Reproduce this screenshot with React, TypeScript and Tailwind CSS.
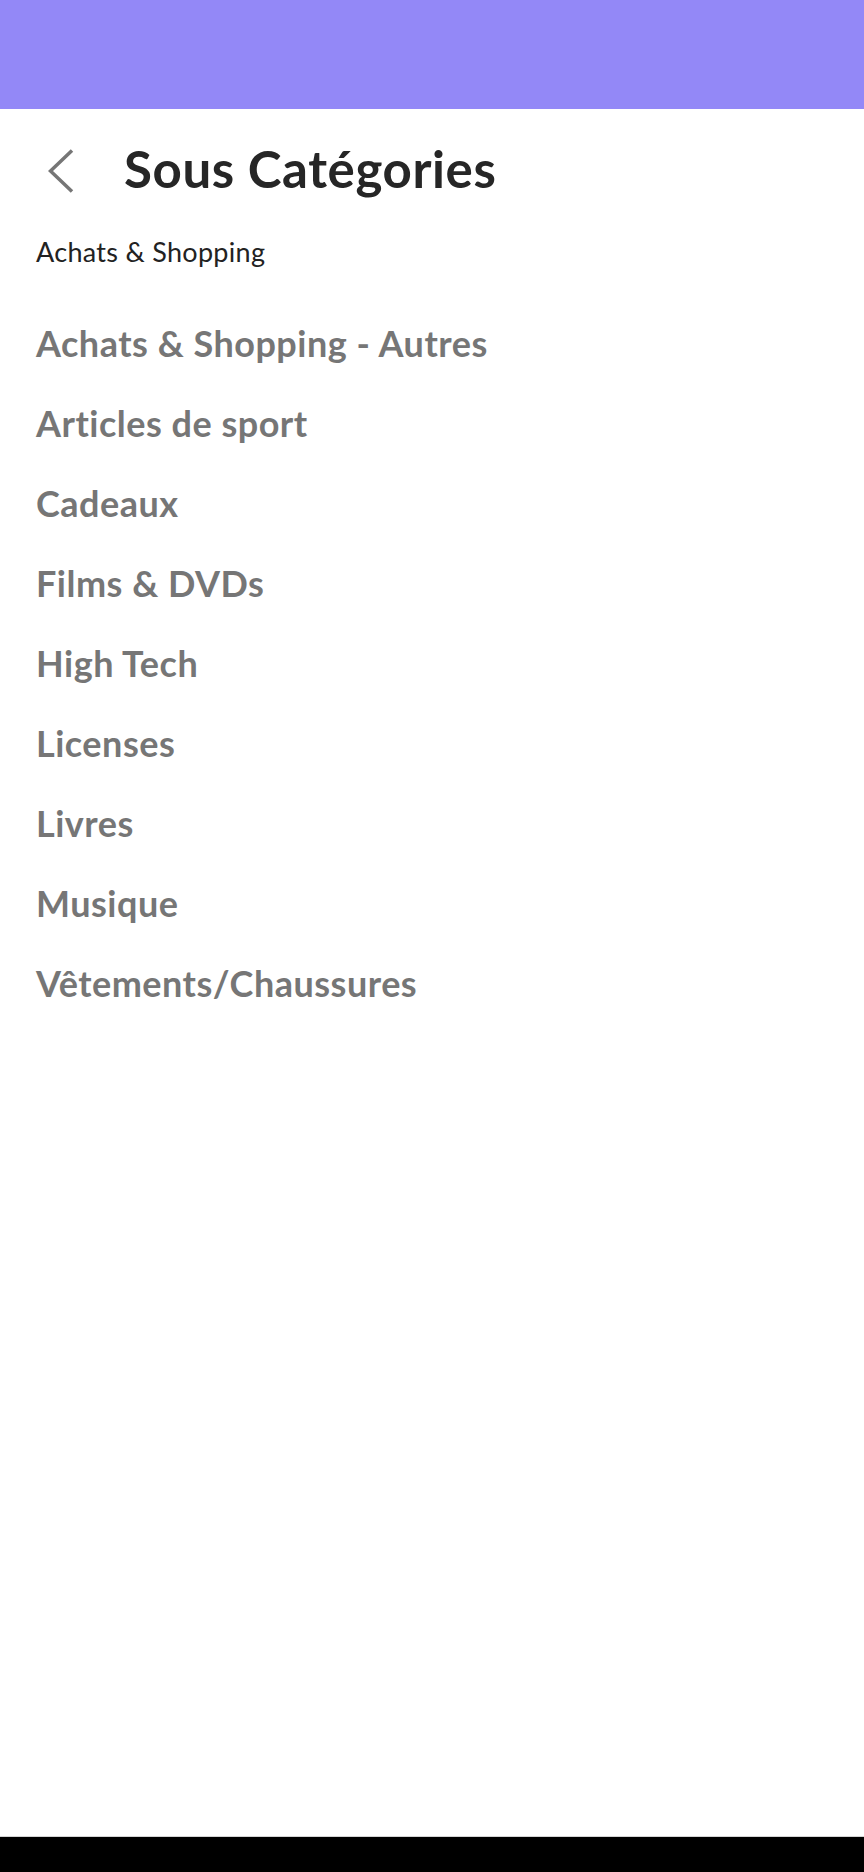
import React from "react";

const subCategories = [
  "Achats & Shopping - Autres",
  "Articles de sport",
  "Cadeaux",
  "Films & DVDs",
  "High Tech",
  "Licenses",
  "Livres",
  "Musique",
  "Vêtements/Chaussures",
];

function BackChevron() {
  return (
    <svg width="26" height="44" viewBox="0 0 26 44" fill="none" className="shrink-0">
      <polyline
        points="24,1.5 2.5,22 24,42.5"
        stroke="#767676"
        strokeWidth="3.5"
        strokeLinecap="butt"
        strokeLinejoin="miter"
      />
    </svg>
  );
}

export default function App() {
  return (
    <div
      className="flex h-[1872px] w-full flex-col bg-white"
      style={{ fontFamily: "Lato, 'Noto Sans', sans-serif" }}
    >
      {/* Status bar / top band */}
      <div className="h-[109px] w-full bg-[#9388f7]" />

      <div className="flex-1 px-[36px]">
        {/* Title row */}
        <div className="flex items-start pt-[35px]">
          <button className="ml-[12px] mt-[5px]">
            <BackChevron />
          </button>
          <h1 className="ml-[50px] text-[51px] font-bold leading-[50px] tracking-[0.6px] text-[#262626]">
            Sous Catégories
          </h1>
        </div>

        <p className="mt-[44px] text-[27px] leading-[27px] tracking-[0.3px] text-[#222222]">
          Achats &amp; Shopping
        </p>

        <ul className="mt-[38px]">
          {subCategories.map((name, index) => (
            <li
              key={index}
              className="text-[36px] font-bold leading-[80px] tracking-[0.5px] text-[#767676]"
            >
              {name}
            </li>
          ))}
        </ul>
      </div>

      {/* Bottom navigation bar */}
      <div className="h-[36px] w-full border-t border-[#d4d4d4] bg-black" />
    </div>
  );
}
